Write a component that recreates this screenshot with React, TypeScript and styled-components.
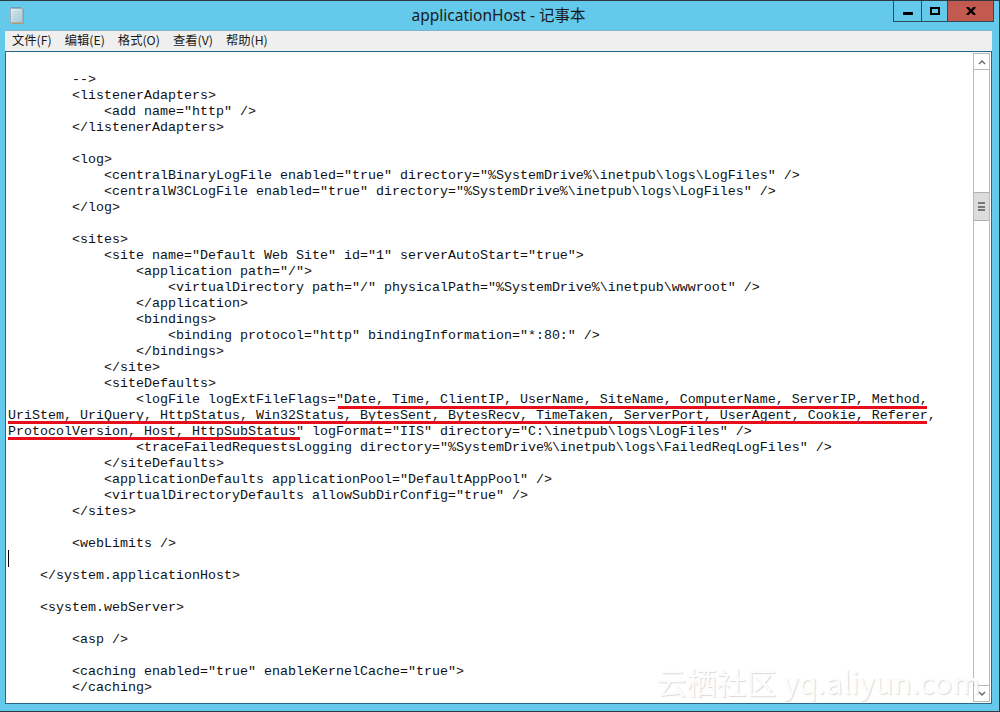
import styled, { createGlobalStyle } from "styled-components";

const LINES = [
  "        -->",
  "        <listenerAdapters>",
  '            <add name="http" />',
  "        </listenerAdapters>",
  "",
  "        <log>",
  '            <centralBinaryLogFile enabled="true" directory="%SystemDrive%\\inetpub\\logs\\LogFiles" />',
  '            <centralW3CLogFile enabled="true" directory="%SystemDrive%\\inetpub\\logs\\LogFiles" />',
  "        </log>",
  "",
  "        <sites>",
  '            <site name="Default Web Site" id="1" serverAutoStart="true">',
  '                <application path="/">',
  '                    <virtualDirectory path="/" physicalPath="%SystemDrive%\\inetpub\\wwwroot" />',
  "                </application>",
  "                <bindings>",
  '                    <binding protocol="http" bindingInformation="*:80:" />',
  "                </bindings>",
  "            </site>",
  "            <siteDefaults>",
  '                <logFile logExtFileFlags="Date, Time, ClientIP, UserName, SiteName, ComputerName, ServerIP, Method,',
  "UriStem, UriQuery, HttpStatus, Win32Status, BytesSent, BytesRecv, TimeTaken, ServerPort, UserAgent, Cookie, Referer,",
  'ProtocolVersion, Host, HttpSubStatus" logFormat="IIS" directory="C:\\inetpub\\logs\\LogFiles" />',
  '                <traceFailedRequestsLogging directory="%SystemDrive%\\inetpub\\logs\\FailedReqLogFiles" />',
  "            </siteDefaults>",
  '            <applicationDefaults applicationPool="DefaultAppPool" />',
  '            <virtualDirectoryDefaults allowSubDirConfig="true" />',
  "        </sites>",
  "",
  "        <webLimits />",
  "",
  "    </system.applicationHost>",
  "",
  "    <system.webServer>",
  "",
  "        <asp />",
  "",
  '        <caching enabled="true" enableKernelCache="true">',
  "        </caching>",
];

const MENUS = ["文件(F)", "编辑(E)", "格式(O)", "查看(V)", "帮助(H)"];

const GlobalStyle = createGlobalStyle`
  html, body {
    margin: 0;
    padding: 0;
    background: #65c9ec;
  }
`;

const Window = styled("div")`
  box-sizing: border-box;
  position: relative;
  width: 1000px;
  height: 712px;
  display: flex;
  flex-direction: column;
  padding: 0 7px 7px 5px;
  background: #65c9ec;
  border-top: 1px solid #2f3a40;
  border-right: 1px solid #2f3a40;
  border-bottom: 1px solid #2f3a40;
  overflow: hidden;
`;

const TitleBar = styled("div")`
  position: relative;
  box-sizing: border-box;
  height: 29px;
  padding-bottom: 3px;
  flex: none;
  display: flex;
  align-items: center;
  justify-content: center;
`;

const AppIcon = styled("svg")`
  position: absolute;
  left: 5px;
  top: 6px;
`;

const Title = styled("div")`
  font-family: "Noto Sans", "Noto Sans CJK SC", sans-serif;
  font-size: 15.5px;
  color: #1a1a1a;
`;

const Controls = styled("div")`
  position: absolute;
  top: -1px;
  right: -2px;
  height: 21px;
  display: flex;
  border: 1px solid #2c4a5c;
  border-top: none;
`;

const ControlButton = styled("div")<{ $close?: boolean; $width: number }>`
  width: ${(p) => p.$width}px;
  padding-top: 1px;
  display: flex;
  align-items: center;
  justify-content: center;
  background: ${(p) => (p.$close ? "#c35a50" : "transparent")};
  & + & {
    border-left: 1px solid #2c4a5c;
  }
`;

const MenuBar = styled("div")`
  height: 18px;
  padding: 0 0 2px 7px;
  flex: none;
  display: flex;
  align-items: center;
  gap: 13px;
  background: #efefef;
  border-top: 1px solid #7fb4d0;
`;

const MenuItem = styled("span")`
  font-family: "Noto Sans CJK SC", "Noto Sans", sans-serif;
  font-size: 12.3px;
  color: #1a1a1a;
`;

const Editor = styled("div")`
  position: relative;
  flex: 1;
  min-height: 0;
  display: flex;
  background: #fff;
  border: 1px solid #2b6690;
  overflow: hidden;
`;

const TextArea = styled("div")`
  flex: 1;
  padding: 20px 0 0 2px;
  font-family: "Liberation Mono", monospace;
  font-size: 13.33px;
  line-height: 16px;
  color: #111;
`;

const Line = styled("div")`
  height: 16px;
  white-space: pre;
`;

const Caret = styled("div")`
  position: absolute;
  left: 2px;
  top: 498px;
  width: 1px;
  height: 17px;
  background: #000;
`;

const RedLine = styled("div")<{ $left: number; $top: number; $width: number }>`
  position: absolute;
  left: ${(p) => p.$left}px;
  top: ${(p) => p.$top}px;
  width: ${(p) => p.$width}px;
  height: 3px;
  background: #e60f1b;
`;

const Scrollbar = styled("div")`
  flex: none;
  width: 15px;
  margin: 1px 1px 1px 0;
  display: flex;
  flex-direction: column;
  border: 1px solid #b9b9b9;
  background: #fff;
`;

const ScrollButton = styled("div")`
  height: 15px;
  flex: none;
  display: flex;
  align-items: center;
  justify-content: center;
`;

const ScrollTrack = styled("div")`
  flex: 1;
  padding-top: 122px;
  border-top: 1px solid #b9b9b9;
  border-bottom: 1px solid #b9b9b9;
`;

const ScrollThumb = styled("div")`
  height: 27px;
  display: flex;
  flex-direction: column;
  align-items: center;
  justify-content: center;
  gap: 1.5px;
  background: #dcdcdc;
  border-top: 1px solid #b0b0b0;
  border-bottom: 1px solid #b0b0b0;
`;

const Grip = styled("span")`
  width: 7px;
  height: 2px;
  background: #777;
`;

const Watermark = styled("div")`
  position: absolute;
  right: 11px;
  bottom: 4px;
  font-family: "Noto Sans CJK SC", "Noto Sans", sans-serif;
  font-size: 30px;
  line-height: 36px;
  white-space: nowrap;
  color: #fdfdfd;
  text-shadow: 1px 1px 1px #dadada;
`;

function NotepadIcon() {
  return (
    <AppIcon width="14" height="17" viewBox="0 0 14 17">
      <defs>
        <linearGradient id="pad" x1="0" y1="0" x2="1" y2="1">
          <stop offset="0" stopColor="#e4f2f6" />
          <stop offset="1" stopColor="#9cc6d4" />
        </linearGradient>
      </defs>
      <rect x="2" y="2" width="12" height="15" fill="#b79a68" />
      <rect x="0.5" y="1.5" width="12" height="14" fill="url(#pad)" stroke="#9fb2b8" />
      <path d="M2.5 5h8M2.5 7.5h8M2.5 10h8M2.5 12.5h8" stroke="#b4d2dc" />
      <path d="M1.5 0.5h10" stroke="#6f7a7e" strokeDasharray="1 1" />
    </AppIcon>
  );
}

function App() {
  return (
    <>
      <GlobalStyle />
      <Window>
        <TitleBar>
          <NotepadIcon />
          <Title>applicationHost - 记事本</Title>
          <Controls>
            <ControlButton $width={27}>
              <svg width="10" height="8" viewBox="0 0 10 8">
                <rect width="10" height="3" y="5" fill="#000" />
              </svg>
            </ControlButton>
            <ControlButton $width={25}>
              <svg width="10" height="8" viewBox="0 0 10 8">
                <rect x="1" y="1" width="8" height="6" fill="none" stroke="#000" strokeWidth="2" />
              </svg>
            </ControlButton>
            <ControlButton $close $width={45}>
              <svg width="10" height="8" viewBox="0 0 10 8">
                <path d="M1 0l8 8M9 0l-8 8" stroke="#000" strokeWidth="2.4" />
              </svg>
            </ControlButton>
          </Controls>
        </TitleBar>
        <MenuBar>
          {MENUS.map((menu) => (
            <MenuItem key={menu}>{menu}</MenuItem>
          ))}
        </MenuBar>
        <Editor>
          <TextArea>
            {LINES.map((line, i) => (
              <Line key={i}>{line}</Line>
            ))}
          </TextArea>
          <Caret />
          <RedLine $left={332} $top={354} $width={589} />
          <RedLine $left={2} $top={369} $width={919} />
          <RedLine $left={2} $top={385} $width={292} />
          <Scrollbar>
            <ScrollButton>
              <svg width="8" height="6" viewBox="0 0 8 6">
                <path d="M1 5l3-3 3 3" fill="none" stroke="#666" strokeWidth="1.4" />
              </svg>
            </ScrollButton>
            <ScrollTrack>
              <ScrollThumb>
                <Grip />
                <Grip />
                <Grip />
              </ScrollThumb>
            </ScrollTrack>
            <ScrollButton>
              <svg width="8" height="6" viewBox="0 0 8 6">
                <path d="M1 1l3 3 3-3" fill="none" stroke="#666" strokeWidth="1.4" />
              </svg>
            </ScrollButton>
          </Scrollbar>
          <Watermark>云栖社区 yq.aliyun.com</Watermark>
        </Editor>
      </Window>
    </>
  );
}

export default App;
